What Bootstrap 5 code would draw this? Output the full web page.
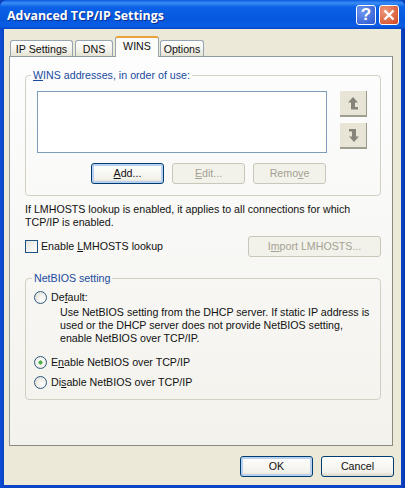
<!DOCTYPE html>
<html lang="en">
<head>
<meta charset="utf-8">
<title>Advanced TCP/IP Settings</title>
<link href="https://cdn.jsdelivr.net/npm/bootstrap@5.3.0/dist/css/bootstrap.min.css" rel="stylesheet">
<style>
html,body{margin:0;height:488px;overflow:hidden;background:#0a3fb8}
body{font-family:"Liberation Sans",Arial,sans-serif;font-size:10.66px;line-height:13px;color:#111}
.xp-win{height:488px;display:flex;flex-direction:column;background:linear-gradient(90deg,#0d4fd8 0,#0a45c8 3px,#0a45c8 401px,#0836a8 405px);border-radius:7px 7px 0 0}
.xp-title{height:29px;flex:none;display:flex;align-items:center;padding:1px 6px 0 7px;background:linear-gradient(180deg,#0a5ae0 0,#3b8ef5 3px,#0a62e8 7px,#0657dc 20px,#0a5ee6 26px,#0645c4 29px);border-radius:7px 7px 0 0}
.xp-title-text{font-family:"Open Sans",sans-serif;font-weight:700;font-size:12.4px;color:#fff;text-shadow:1px 1px 0 #0a2f90;flex:1}
.xp-cap{width:20px;height:20px;border:1px solid #fff;border-radius:3px;display:flex;align-items:center;justify-content:center;color:#fff;font-weight:700;font-size:17px;padding:0;margin-top:-1px}
.xp-help{background:radial-gradient(circle at 30% 30%,#6f97ee,#2a55d0);margin-right:3px}
.xp-close{background:radial-gradient(circle at 30% 30%,#ee9a7c,#d2451f)}
.xp-client{flex:1;margin:0 4px 3px 4px;background:#ece9d8;padding:8px 7px 0 5px;display:flex;flex-direction:column}
.xp-tabs{height:19px;border:0;gap:0;padding-left:1px;flex-wrap:nowrap;align-items:flex-end;position:relative;z-index:2}
.xp-tabs .nav-link{height:16px;margin:0 2px 0 0;padding:2px 0 0;text-align:center;color:#111;background:linear-gradient(180deg,#fff,#f0efe6 70%,#e4e2d4);border:1px solid #97a5b0;border-bottom:0;border-radius:3px 3px 0 0;font-size:10.66px;line-height:13px}
.xp-tabs .nav-link.active{height:21px;margin:0 1px 0 0;padding-top:2px;color:#111;background:#fbfbf9;border-color:#97a5b0;border-top:2px solid #e8a33a;position:relative;top:1px}
.xp-t1{width:63px}.xp-t2{width:38px}.xp-t3{width:44px}.xp-t4{width:44px}
.xp-panel{height:390px;width:384px;flex:none;border:1px solid #8f9a9f;border-right-color:#8a8a80;border-bottom-color:#8a8a80;background:linear-gradient(180deg,#fdfdfe,#f3f2ec);padding:12px 11px 0 15px}
.xp-group{border:1px solid #d2d0c2;border-radius:4px;margin:0;width:356px;min-width:0;position:relative}
.xp-group legend{float:none;width:auto;font-size:10.66px;line-height:13px;color:#1a4a9e;padding:0 2px}
.xp-g1{height:127px;padding:9px 0 0 11px}
.xp-g1 legend{margin:0 0 0 -6px}
.xp-g2{height:128px;padding:6px 0 0 8px;margin-top:15px}
.xp-g2 legend{margin:0 0 0 -2px}
.xp-list{width:290px;height:62px;flex:none;background:#fff;border:1px solid #7f9db9}
.xp-btn{width:73px;height:21px;padding:0;font-size:10.66px;line-height:13px;color:#111;border:1px solid #003c74;border-radius:3px;background:linear-gradient(180deg,#fff,#f2f1ea 80%,#d8d5c6)}
.xp-btn:hover{color:#111;border-color:#003c74;background:linear-gradient(180deg,#fff,#f2f1ea 80%,#d8d5c6)}
.xp-default{box-shadow:inset 0 0 0 2px #b9d0ef}
.xp-btn.disabled,.xp-btn:disabled{opacity:1;color:#a3a193;background:#f3f2ea;border-color:#c9c7ba}
.xp-arrow{width:27px;height:26px;padding:0;border:0;border-radius:0;background:#e6e3d3;display:flex;align-items:center;justify-content:center}
.xp-arrow:disabled{opacity:1;background:#e8e5d6;border:0;border-right:1px solid #9a988a;border-bottom:2px solid #a09e90}
.xp-arrows{margin-left:13px;gap:6px}
.xp-btnrow{margin:10px 0 0 54px;gap:8px}
.xp-note{margin:7px 0 0;width:350px}
.xp-checkrow{margin-top:7px;width:356px;height:21px}
.xp-import{width:133px}
.xp-check{width:13px;height:13px;flex:none;margin:0 3px 0 0;border:1px solid #1c5180;border-radius:0;background:linear-gradient(135deg,#e4e3da,#fff);appearance:none}
.xp-radio-row{height:13px}
.xp-radio{width:13px;height:13px;flex:none;margin:0 4px 0 0;border:1px solid #2f5a80;border-radius:50%;background:radial-gradient(circle at 65% 65%,#fff,#dcdad0);appearance:none}
.xp-radio:checked{background:radial-gradient(circle at 50% 50%,#4fb04a 0,#4fb04a 24%,#fff 30%,#dcdad0 100%)}
.xp-desc{margin:2px 0 0 26px;width:312px;height:39px}
.xp-r2{margin-top:11px}
.xp-r3{margin-top:7px}
.xp-foot{margin:10px 0 0 0;gap:8px}
</style>
</head>
<body>
<div class="xp-win">
  <div class="xp-title">
    <div class="xp-title-text">Advanced TCP/IP Settings</div>
    <div class="xp-cap xp-help">?</div>
    <div class="xp-cap xp-close"><svg width="12" height="12" viewBox="0 0 12 12"><path d="M1.5 1.5l9 9M10.5 1.5l-9 9" stroke="#fff" stroke-width="2.4" fill="none"/></svg></div>
  </div>
  <div class="xp-client">
    <ul class="nav nav-tabs xp-tabs">
      <li class="nav-item"><a class="nav-link xp-t1" href="#">IP Settings</a></li>
      <li class="nav-item"><a class="nav-link xp-t2" href="#">DNS</a></li>
      <li class="nav-item"><a class="nav-link active xp-t3" href="#">WINS</a></li>
      <li class="nav-item"><a class="nav-link xp-t4" href="#">Options</a></li>
    </ul>
    <div class="xp-panel">
      <fieldset class="xp-group xp-g1">
        <legend><u>W</u>INS addresses, in order of use:</legend>
        <div class="d-flex">
          <div class="xp-list"></div>
          <div class="d-flex flex-column xp-arrows">
            <button class="btn xp-arrow" disabled aria-label="Up"><svg width="11" height="13" viewBox="0 0 11 13"><path d="M5 0L0 5.5H3V12.5H10V10H7V5.5H10Z" fill="#85837a"/></svg></button>
            <button class="btn xp-arrow" disabled aria-label="Down"><svg width="11" height="13" viewBox="0 0 11 13"><path d="M1 0V2.5H4V7.5H1L6 13L11 7.5H8V0Z" fill="#85837a"/></svg></button>
          </div>
        </div>
        <div class="d-flex xp-btnrow">
          <button class="btn xp-btn xp-default"><u>A</u>dd...</button>
          <button class="btn xp-btn" disabled><u>E</u>dit...</button>
          <button class="btn xp-btn" disabled>Remo<u>v</u>e</button>
        </div>
      </fieldset>
      <p class="xp-note">If LMHOSTS lookup is enabled, it applies to all connections for which TCP/IP is enabled.</p>
      <div class="d-flex align-items-center justify-content-between xp-checkrow">
        <label class="d-flex align-items-center"><input type="checkbox" class="xp-check"><span>Enable <u>L</u>MHOSTS lookup</span></label>
        <button class="btn xp-btn xp-import" disabled>I<u>m</u>port LMHOSTS...</button>
      </div>
      <fieldset class="xp-group xp-g2">
        <legend>NetBIOS setting</legend>
        <label class="d-flex align-items-center xp-radio-row"><input type="radio" name="nb" class="xp-radio"><span>De<u>f</u>ault:</span></label>
        <div class="xp-desc">Use NetBIOS setting from the DHCP server. If static IP address is used or the DHCP server does not provide NetBIOS setting, enable NetBIOS over TCP/IP.</div>
        <label class="d-flex align-items-center xp-radio-row xp-r2"><input type="radio" name="nb" class="xp-radio" checked><span>E<u>n</u>able NetBIOS over TCP/IP</span></label>
        <label class="d-flex align-items-center xp-radio-row xp-r3"><input type="radio" name="nb" class="xp-radio"><span>Di<u>s</u>able NetBIOS over TCP/IP</span></label>
      </fieldset>
    </div>
    <div class="d-flex justify-content-end xp-foot">
      <button class="btn xp-btn xp-default">OK</button>
      <button class="btn xp-btn">Cancel</button>
    </div>
  </div>
</div>
<script src="https://cdn.jsdelivr.net/npm/bootstrap@5.3.0/dist/js/bootstrap.bundle.min.js"></script>
</body>
</html>
